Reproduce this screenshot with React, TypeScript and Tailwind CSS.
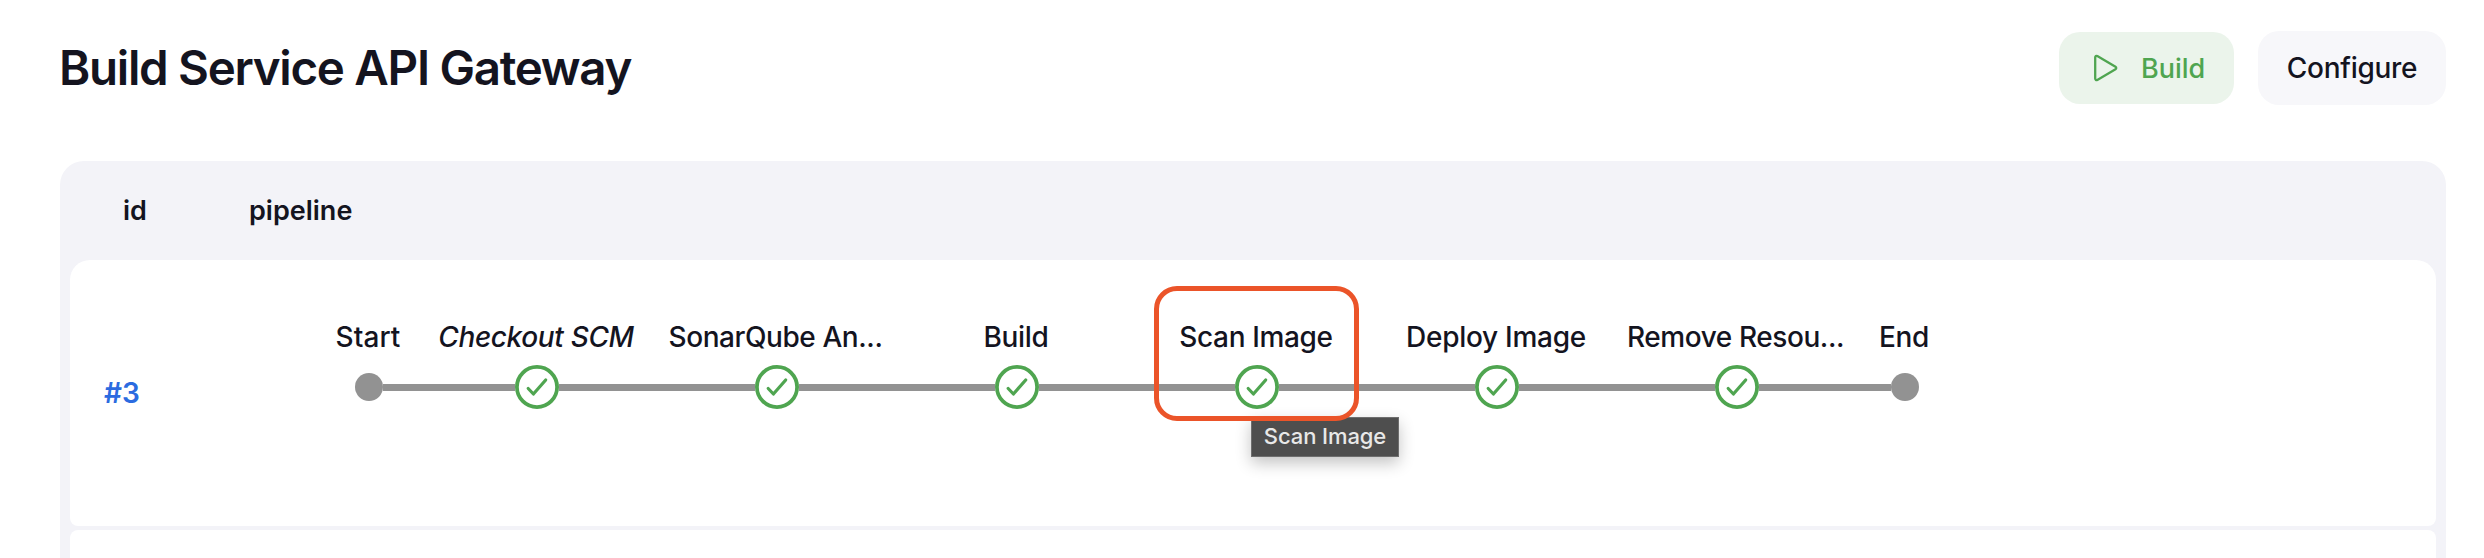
type Stage = {
  name: string;
  kind: "start" | "stage" | "end";
  labelClass?: string;
  highlighted?: boolean;
};

const stages: Stage[] = [
  { name: "Start", kind: "start", labelClass: "pr-[2px] tracking-[0.1px]" },
  { name: "Checkout SCM", kind: "stage", labelClass: "pr-[2px] italic tracking-[-0.35px]" },
  { name: "SonarQube An...", kind: "stage", labelClass: "pr-[3px] tracking-[-0.42px]" },
  { name: "Build", kind: "stage", labelClass: "pr-[2px] tracking-[-0.3px]" },
  { name: "Scan Image", kind: "stage", labelClass: "pr-[2px] tracking-[-0.35px]", highlighted: true },
  { name: "Deploy Image", kind: "stage", labelClass: "pr-[2px] tracking-[-0.28px]" },
  { name: "Remove Resou...", kind: "stage", labelClass: "pr-[3px] tracking-[-0.42px]" },
  { name: "End", kind: "end", labelClass: "pr-[2px] tracking-[-0.3px]" },
];

function PlayIcon() {
  return (
    <svg width="28" height="32" viewBox="0 0 28 32" fill="none" className="shrink-0">
      <path
        d="M4.2 5.4v21.2c0 1.2 1.1 1.8 2.1 1.3l18.2-10.6c1-.6 1-2 0-2.6L6.3 4.1C5.3 3.6 4.2 4.2 4.2 5.4Z"
        stroke="#4fa550"
        strokeWidth="2.3"
        strokeLinejoin="round"
      />
    </svg>
  );
}

function SuccessIcon() {
  return (
    <svg width="44" height="44" viewBox="0 0 44 44" fill="none" className="shrink-0">
      <circle cx="22" cy="22" r="20.1" fill="#fff" stroke="#4fa550" strokeWidth="3.8" />
      <path
        d="M13.2 23.5 18.4 29 30.7 15"
        stroke="#4fa550"
        strokeWidth="3.2"
        strokeLinecap="round"
        strokeLinejoin="round"
      />
    </svg>
  );
}

function StageColumn({ stage }: { stage: Stage }) {
  const edge = stage.kind !== "stage";
  return (
    <div className={edge ? "relative w-24" : "relative w-60"}>
      <div
        className={
          "flex h-10 items-center justify-center whitespace-nowrap text-[28px] leading-10 font-medium text-[#14141f] " +
          (stage.labelClass ?? "")
        }
      >
        {stage.name}
      </div>
      <div className="mt-2 flex h-11 items-center">
        <div className={stage.kind === "start" ? "h-[7px] flex-1" : "h-[7px] flex-1 bg-[#929292]"} />
        {edge ? <div className="size-7 shrink-0 rounded-full bg-[#929292]" /> : <SuccessIcon />}
        <div className={stage.kind === "end" ? "h-[7px] flex-1" : "h-[7px] flex-1 bg-[#929292]"} />
      </div>
      {stage.highlighted && (
        <>
          <div className="absolute top-[100px] left-[114px] flex h-10 w-[148px] items-center justify-center border border-[#6e6e6e] bg-[#4e4e4e] text-[22px] leading-none font-medium tracking-[-0.1px] whitespace-nowrap text-[#e8e8e8] shadow-[0_6px_16px_rgba(0,0,0,0.24)]">
            <span className="-mt-[3px]">Scan Image</span>
          </div>
          <div className="absolute -top-[31px] left-[17px] h-[135px] w-[205px] rounded-[23px] border-[5px] border-[#eb5429]" />
        </>
      )}
    </div>
  );
}

export default function App() {
  return (
    <div className="flex h-[558px] w-full flex-col overflow-hidden bg-white pr-[38px] pl-[60px] font-['Inter',sans-serif] text-[#14141f]">
      <header className="flex h-[161px] shrink-0 items-start justify-between">
        <h1 className="mt-[38px] -ml-px text-[47.5px] leading-[60px] font-semibold tracking-[-1.3px] whitespace-nowrap">
          Build Service API Gateway
        </h1>
        <div className="mt-[31px] flex h-[74px] items-center gap-6">
          <button className="flex h-[72px] w-[175px] items-center rounded-[21px] bg-[#ebf4eb] pl-8 text-[27px] font-[450] text-[#4fa550]">
            <PlayIcon />
            <span className="mt-[3px] ml-[22px]">Build</span>
          </button>
          <button className="flex h-[74px] w-[188px] items-center justify-center rounded-[21px] bg-[#f7f7fa] text-[28px] font-medium tracking-[-0.3px]">
            Configure
          </button>
        </div>
      </header>

      <main className="flex flex-1 flex-col rounded-t-[24px] bg-[#f3f3f8] px-[10px]">
        <div className="flex h-[99px] shrink-0 items-center pt-px text-[27px] font-semibold">
          <div className="w-[179px] pl-[53px]">id</div>
          <div>pipeline</div>
        </div>
        <div className="flex h-[266px] shrink-0 rounded-t-[20px] rounded-b-[8px] bg-white">
          <div className="flex w-[251px] items-center pl-[34px] text-[28px] font-semibold text-[#2b6be0]">
            #3
          </div>
          <div className="flex pt-[57px]">
            {stages.map((stage) => (
              <StageColumn key={stage.name} stage={stage} />
            ))}
          </div>
        </div>
        <div className="mt-1 flex-1 rounded-t-[8px] bg-white" />
      </main>
    </div>
  );
}
